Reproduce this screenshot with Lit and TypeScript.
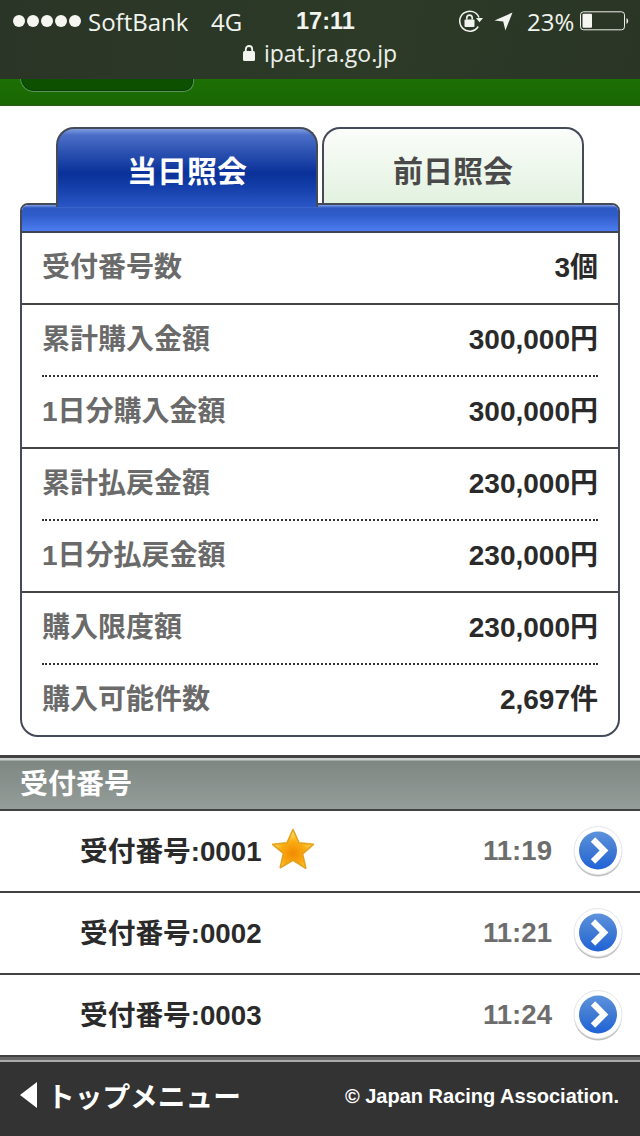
import { LitElement, html, css } from "lit";
import { customElement } from "lit/decorators.js";

@customElement("app-root")
export class AppRoot extends LitElement {
  static styles = css`
    :host { display: block; width: 640px; height: 1136px; background: #fff; font-family: "Liberation Sans", "Noto Sans CJK JP", sans-serif; overflow: hidden; }
    * { box-sizing: border-box; }
    svg { display: block; flex: none; }
    .page { display: flex; flex-direction: column; height: 1136px; }

    .status { height: 79px; background: linear-gradient(100deg, #2b3527, #2c3a27 60%, #2a3526); color: #f2f4ef; font-family: "Open Sans", "Liberation Sans", sans-serif; flex: none; position: relative; z-index: 2; padding-top: 6px; }
    .sline { display: flex; align-items: center; height: 30px; font-size: 24px; white-space: nowrap; }
    .dots { display: flex; gap: 2px; margin-left: 13px; }
    .dots i { width: 12px; height: 12px; border-radius: 50%; background: #f5f6f2; display: block; }
    .carrier { margin-left: 7px; width: 123px; }
    .net { width: 85px; }
    .time { font-weight: 700; width: 163px; font-family: "Liberation Sans", sans-serif; font-size: 23.5px; }
    .rot { width: 35px; }
    .loc { width: 33px; }
    .pct { width: 53px; }
    .host { display: flex; justify-content: center; align-items: center; gap: 9px; margin-top: 3px; font-size: 23px; height: 28px; color: #eef0ea; }

    .green { height: 27px; background: linear-gradient(#1c7004, #196603); position: relative; flex: none; border-bottom: 1px solid #2f5a22; }
    .gbtn { position: absolute; left: 20px; width: 174px; top: -12px; height: 25px; border-radius: 0 0 10px 14px; background: #0c5000; border: 1px solid #59955c; border-top: none; box-shadow: inset 0 0 0 1px #0a3d02; }

    .content { flex: 1; min-height: 0; display: flex; flex-direction: column; padding-top: 21px; }
    .tabs { display: flex; gap: 4px; margin-left: 56px; height: 80px; position: relative; flex: none; }
    .tab { width: 262px; height: 80px; border: 2px solid #454a58; border-bottom: none; border-radius: 18px 18px 0 0; display: flex; justify-content: center; padding-top: 20px; font-size: 30px; font-weight: 700; line-height: 46px; }
    .tab.on { background: linear-gradient(#7f9be0 0, #4b6fc8 6px, #2a50b0 24px, #0a3199 44px, #123ca6 56px, #2b59c8 80px); color: #fff; position: relative; z-index: 2; }
    .tab.off { background: linear-gradient(#fbfdfa, #e2f2e0); color: #4a4a4a; height: 76px; }

    .card { margin: -4px 20px 0; height: 534px; border: 2px solid #454a58; border-radius: 8px 8px 18px 18px; position: relative; flex: none; background: #fff; overflow: hidden; }
    .chead { height: 28px; border-bottom: 2px solid #3e4454; background: linear-gradient(#7e9de6 0, #2e58c4 3px, #2f5cc9 10px, #4c7cf0 26px); }
    .group { padding: 0 20px; }
    .group + .group { border-top: 2px solid #454545; }
    .row { height: 70px; display: flex; justify-content: space-between; align-items: center; padding-bottom: 6px; font-size: 28px; font-weight: 700; color: #6a6a6a; }
    .row b { color: #2a2a2a; font-weight: 700; }
    .row + .row { height: 72px; border-top: 2px dotted #333; }
    .group:first-of-type .row { height: 71px; }

    .sect { margin-top: 18px; height: 56px; border-top: 3px solid #414141; border-bottom: 2px solid #414141; background: linear-gradient(#c9d0cb 0, #c9d0cb 2px, #7e8782 3px, #949d99 100%); color: #fff; font-size: 28px; font-weight: 700; padding-left: 20px; line-height: 54px; flex: none; }
    .item { height: 82px; display: flex; align-items: center; border-bottom: 2px solid #414141; padding-left: 80px; font-size: 28px; font-weight: 700; color: #2a2a2a; flex: none; }
    .item .lbl { display: flex; align-items: center; padding-bottom: 4px; font-size: 27.7px; }
    .item .star { margin-left: 9px; }
    .item .t { margin-left: auto; color: #6d6d6d; margin-right: 21px; font-size: 27.6px; }
    .item .go { margin-right: 17px; }

    .foot { margin-top: auto; height: 81px; flex: none; background: #333; border-top: 3px solid #666; box-shadow: inset 0 2px 0 #aaa; display: flex; align-items: center; justify-content: space-between; padding: 0 21px 6px 20px; color: #fff; }
    .back { display: flex; align-items: center; gap: 10px; font-size: 27.7px; font-weight: 700; margin-bottom: 2px; }
    .copy { font-size: 20px; font-weight: 700; }
  `;

  private groups = [
    [["受付番号数", "3個"]],
    [["累計購入金額", "300,000円"], ["1日分購入金額", "300,000円"]],
    [["累計払戻金額", "230,000円"], ["1日分払戻金額", "230,000円"]],
    [["購入限度額", "230,000円"], ["購入可能件数", "2,697件"]],
  ];

  private star() {
    return html`<svg class="star" width="44" height="44" viewBox="0 0 44 44">
      <defs><radialGradient id="sg" cx=".5" cy=".62" r=".55"><stop offset="0" stop-color="#f28a00"/><stop offset=".55" stop-color="#f9ab12"/><stop offset="1" stop-color="#ffe05c"/></radialGradient></defs>
      <path d="M22 2.5l6 13.4 14.4 1.4-10.8 9.6 3.2 14.3L22 33.3 9.2 40.7l3.2-14.3L1.6 17.3 16 15.9z" fill="url(#sg)" stroke="#e5a11c" stroke-width="1.6" stroke-linejoin="round"/>
    </svg>`;
  }

  private go(i: number) {
    return html`<svg class="go" width="50" height="52" viewBox="0 0 50 52">
      <defs><linearGradient id="bg${i}" x1="0" y1="0" x2="0" y2="1"><stop offset="0" stop-color="#5d92dd"/><stop offset=".5" stop-color="#3f7ad3"/><stop offset="1" stop-color="#1f62d8"/></linearGradient></defs>
      <circle cx="25" cy="27.5" r="24" fill="#8d8d8d" opacity=".55"/>
      <circle cx="25" cy="25.5" r="24" fill="#fff" stroke="#e4e6ea" stroke-width="1"/>
      <circle cx="25" cy="25.5" r="19" fill="url(#bg${i})"/>
      <path d="M20 14.5l11 11-11 11" fill="none" stroke="#fff" stroke-width="6.2"/>
    </svg>`;
  }

  render() {
    return html`<div class="page">
      <div class="status">
        <div class="sline">
          <div class="dots"><i></i><i></i><i></i><i></i><i></i></div>
          <div class="carrier">SoftBank</div>
          <div class="net">4G</div>
          <div class="time">17:11</div>
          <div class="rot">
            <svg width="25" height="22" viewBox="0 0 25 22">
              <path d="M19.2 16.5A10 10 0 1 1 20 7.5" fill="none" stroke="#f2f4ef" stroke-width="1.5"/>
              <path d="M17 8h7l-3.5 4.2z" fill="#f2f4ef"/>
              <rect x="5.5" y="9.5" width="10" height="7.5" rx="1" fill="#f2f4ef"/>
              <path d="M7.8 9.5V7.8a2.7 2.7 0 0 1 5.4 0v1.7" fill="none" stroke="#f2f4ef" stroke-width="1.6"/>
            </svg>
          </div>
          <div class="loc">
            <svg width="19" height="19" viewBox="0 0 19 19"><path d="M18.5.5L.5 8.6l8.7.9 2.2 9z" fill="#f2f4ef"/></svg>
          </div>
          <div class="pct">23%</div>
          <svg width="50" height="20" viewBox="0 0 50 20">
            <rect x=".5" y=".8" width="44" height="18" rx="3" fill="none" stroke="#eef0ea" stroke-width="1"/>
            <rect x="2.5" y="2.8" width="9.5" height="14" rx="1" fill="#f5f6f2"/>
            <path d="M46.5 7a3.5 3.5 0 0 1 0 6z" fill="#eef0ea"/>
          </svg>
        </div>
        <div class="host">
          <svg width="12" height="16" viewBox="0 0 12 16"><rect x="0" y="6" width="12" height="10" rx="1.5" fill="#f2f4ef"/><path d="M2.8 6.5V4.2a3.2 3.2 0 0 1 6.4 0v2.3" fill="none" stroke="#f2f4ef" stroke-width="1.8"/></svg>
          <span>ipat.jra.go.jp</span>
        </div>
      </div>
      <div class="green"><div class="gbtn"></div></div>
      <div class="content">
        <div class="tabs">
          <div class="tab on">当日照会</div>
          <div class="tab off">前日照会</div>
        </div>
        <div class="card">
          <div class="chead"></div>
          ${this.groups.map((g) => html`<div class="group">
            ${g.map(([k, v]) => html`<div class="row"><span>${k}</span><b>${v}</b></div>`)}
          </div>`)}
        </div>
        <div class="sect">受付番号</div>
        ${[["受付番号:0001", "11:19", true], ["受付番号:0002", "11:21", false], ["受付番号:0003", "11:24", false]].map(
          ([a, b, s], i) => html`<div class="item">
            <div class="lbl">${a}${s ? this.star() : ""}</div>
            <div class="t">${b}</div>
            ${this.go(i)}
          </div>`
        )}
        <div class="foot">
          <div class="back">
            <svg width="17" height="26" viewBox="0 0 17 26"><path d="M17 0v26L0 13z" fill="#fff"/></svg>
            <span>トップメニュー</span>
          </div>
          <div class="copy">© Japan Racing Association.</div>
        </div>
      </div>
    </div>`;
  }
}
